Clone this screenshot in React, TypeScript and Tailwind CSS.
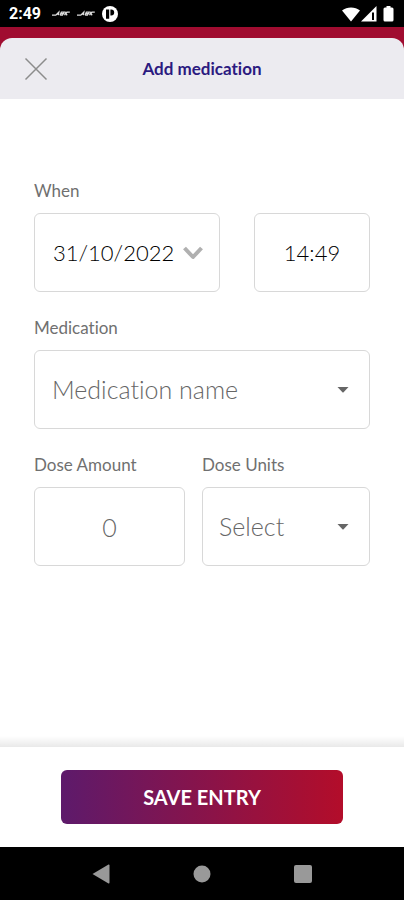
import { useState } from 'react';
import type { ReactNode } from 'react';

interface FieldProps {
  id: string;
  label: string;
  className?: string;
  children: ReactNode;
}

const UNITS = ['mg', 'ml', 'units', 'tablets'];
const MEDICATIONS = ['Insulin', 'Metformin', 'Paracetamol'];

const BOX = 'block h-[79px] w-full rounded-md border border-[#d8d8d8] bg-white font-light outline-none';

function Field({ id, label, className, children }: FieldProps) {
  return (
    <div className={className}>
      <label htmlFor={id} className="mb-3 block text-[17px] leading-5 text-[#707070]">
        {label}
      </label>
      {children}
    </div>
  );
}

function Caret() {
  return (
    <svg viewBox="0 0 12 6" className="pointer-events-none absolute right-[21px] top-[37px] h-[6px] w-3" fill="#666666">
      <path d="M0.5 0h11L6.6 5.2q-.6.6-1.2 0z" />
    </svg>
  );
}

function BrandMark() {
  return (
    <svg viewBox="0 0 18 7" className="h-[7px] w-[18px]" fill="none" stroke="#dddddd" strokeWidth="1.3">
      <path d="M0 5.2h3.8L6.8 2.2 6.3 5.2M4.4 4.2h2.4M8 5.2l1.4-3h2.8l-.8 1.5H9M11.2 3.7l-.8 1.5H8M12.6 5.2l1.4-3.4M17.8 2.2H15l-1.2 1.6 1.4 1.4" />
    </svg>
  );
}

function StatusBar() {
  return (
    <div className="flex h-[27px] items-center bg-black pl-[9px] pr-2 text-white">
      <span className="w-[43px] font-[Roboto,sans-serif] text-base font-bold leading-5">2:49</span>
      <div className="flex flex-1 items-center gap-[7px]">
        <BrandMark />
        <BrandMark />
        <svg viewBox="0 0 16 16" className="h-4 w-4">
          <circle cx="8" cy="8" r="8" fill="#ffffff" />
          <path d="M4 3.4h3.2v9.4H4zM8.4 3.4h.8a3 3 0 0 1 0 6h-.8z" fill="#000000" />
        </svg>
      </div>
      <div className="flex items-center gap-px">
        <svg viewBox="0 0 18 16" className="h-4 w-[18px]" fill="#ffffff">
          <path d="M0 4.6C5 .4 13 .4 18 4.6L9 15.4z" />
        </svg>
        <svg viewBox="0 0 16 16" className="h-4 w-4">
          <path d="M0 15.5L15.5 0v15.5z" fill="#ffffff" />
          <path d="M11 6.5h2v7.5h-2z" fill="#000000" />
        </svg>
        <svg viewBox="0 0 14 16" className="ml-1 h-4 w-[14px]" fill="#ffffff">
          <path d="M4.5 0h4v1.5H10A1.5 1.5 0 0 1 11.5 3v11a1.5 1.5 0 0 1-1.5 1.5H3A1.5 1.5 0 0 1 1.5 14V3A1.5 1.5 0 0 1 3 1.5h1.5z" />
        </svg>
      </div>
    </div>
  );
}

function SystemNav() {
  return (
    <nav className="flex h-[53px] items-center justify-center gap-[83px] bg-black">
      <button type="button" aria-label="Back">
        <svg viewBox="0 0 18 20" className="h-5 w-[18px]" fill="#999999">
          <path d="M0.5 10L16.5.6Q17.5.3 17.5 1.5v17q0 1.2-1 .9z" />
        </svg>
      </button>
      <button type="button" aria-label="Home">
        <svg viewBox="0 0 18 18" className="h-[18px] w-[18px]" fill="#999999">
          <circle cx="9" cy="9" r="8.5" />
        </svg>
      </button>
      <button type="button" aria-label="Recent apps">
        <svg viewBox="0 0 18 18" className="h-[18px] w-[18px]" fill="#999999">
          <rect width="18" height="18" rx="2" />
        </svg>
      </button>
    </nav>
  );
}

export default function App() {
  const [date, setDate] = useState('31/10/2022');
  const [time, setTime] = useState('14:49');
  const [medication, setMedication] = useState('');
  const [amount, setAmount] = useState('');
  const [unit, setUnit] = useState('');

  return (
    <div className="flex min-h-screen flex-col bg-white font-[Lato,sans-serif] [font-variant-ligatures:none]">
      <StatusBar />

      {/* Header */}
      <div className="bg-[#a00c30] pt-[11px]">
        <header className="grid h-[61px] grid-cols-[1fr_auto_1fr] items-center rounded-t-[12px] bg-[#ecebf0] px-6">
          <button type="button" aria-label="Close" className="justify-self-start">
            <svg viewBox="0 0 24 24" className="h-6 w-6" fill="none" stroke="#8c8c8c" strokeWidth="1.5">
              <path d="M1.5 1.5l21 21M22.5 1.5l-21 21" />
            </svg>
          </button>
          <h1 className="text-[17px] font-bold leading-6 text-[#2b1a80]">Add medication</h1>
        </header>
      </div>

      {/* Form */}
      <main className="flex flex-1 flex-col gap-[26px] px-[34px] pt-[82px]">
        <div className="flex items-end gap-[34px]">
          <Field id="date" label="When" className="flex-[186]">
            <div className="relative">
              <input
                id="date"
                value={date}
                onChange={(e) => setDate(e.target.value)}
                className={`${BOX} pl-[18px] pr-10 text-[22px] text-black`}
              />
              <svg
                viewBox="0 0 20 14"
                className="pointer-events-none absolute right-[17px] top-[33px] h-[14px] w-5"
                fill="none"
                stroke="#b0b0b0"
                strokeWidth="4"
              >
                <path d="M1.5 2L10 11l8.5-9" strokeLinejoin="round" />
              </svg>
            </div>
          </Field>
          <div className="flex-[116]">
            <input
              aria-label="Time"
              value={time}
              onChange={(e) => setTime(e.target.value)}
              className={`${BOX} text-center text-[22px] text-black`}
            />
          </div>
        </div>

        <Field id="medication" label="Medication">
          <div className="relative">
            <select
              id="medication"
              value={medication}
              onChange={(e) => setMedication(e.target.value)}
              className={`${BOX} appearance-none pl-[17px] pr-10 text-[25px] text-[#666666]`}
            >
              <option value="">Medication name</option>
              {MEDICATIONS.map((name) => (
                <option key={name}>{name}</option>
              ))}
            </select>
            <Caret />
          </div>
        </Field>

        <div className="flex gap-[17px]">
          <Field id="amount" label="Dose Amount" className="flex-[151]">
            <input
              id="amount"
              inputMode="decimal"
              placeholder="0"
              value={amount}
              onChange={(e) => setAmount(e.target.value)}
              className={`${BOX} text-center text-[25px] text-[#666666] placeholder:text-[#666666]`}
            />
          </Field>
          <Field id="unit" label="Dose Units" className="flex-[168]">
            <div className="relative">
              <select
                id="unit"
                value={unit}
                onChange={(e) => setUnit(e.target.value)}
                className={`${BOX} appearance-none pl-4 pr-10 text-[25px] text-[#666666]`}
              >
                <option value="">Select</option>
                {UNITS.map((name) => (
                  <option key={name}>{name}</option>
                ))}
              </select>
              <Caret />
            </div>
          </Field>
        </div>
      </main>

      {/* Footer */}
      <div className="h-[11px] bg-linear-to-b from-white to-[#e9e9e9]" />
      <footer className="bg-white px-[61px] py-[23px]">
        <button
          type="button"
          className="h-[54px] w-full rounded-md bg-linear-to-r/srgb from-[#5d1a6b] to-[#b30d2a] text-xl font-bold text-white"
        >
          SAVE ENTRY
        </button>
      </footer>
      <SystemNav />
    </div>
  );
}
